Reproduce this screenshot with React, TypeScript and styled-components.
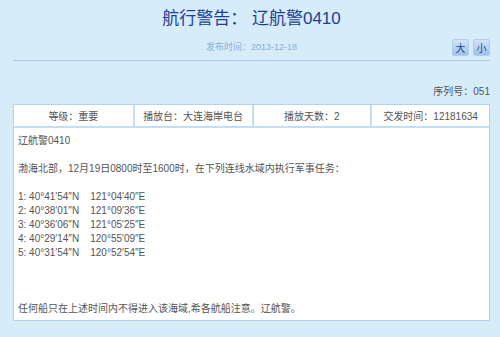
import React from "react";
import styled, { createGlobalStyle } from "styled-components";

const GlobalStyle = createGlobalStyle`
  html, body {
    margin: 0;
    padding: 0;
    background: #d6ecf9;
  }
  body {
    font-family: "Liberation Sans", "Noto Sans CJK SC", sans-serif;
    color: #555;
  }
`;

const Page = styled.div`
  padding: 0 10px 0 13px;
`;

const Title = styled.h1`
  margin: 0;
  padding-top: 9px;
  font-size: 17px;
  line-height: 20px;
  font-weight: normal;
  text-align: center;
  color: #1d3f96;
`;

const InfoRow = styled.div`
  display: grid;
  grid-template-columns: 1fr auto 1fr;
  align-items: center;
  margin-top: 10px;
  padding-bottom: 4px;
  border-bottom: 1px solid #a8caeb;
`;

const PublishDate = styled.div`
  grid-column: 2;
  font-size: 9px;
  line-height: 17px;
  color: #8aaed6;
`;

const SizeButtons = styled.div`
  grid-column: 3;
  justify-self: end;
  display: flex;
  gap: 4px;
  padding-right: 0;
`;

const SizeButton = styled.button`
  width: 17px;
  height: 17px;
  padding: 0;
  border: 1px solid #b3cdeb;
  border-radius: 2px;
  background: linear-gradient(#d2e3f7, #9fc1ea);
  color: #1f4594;
  font-family: "Noto Sans CJK SC", sans-serif;
  font-size: 10px;
  line-height: 15px;
  cursor: pointer;
`;

const Serial = styled.div`
  margin-top: 24px;
  text-align: right;
  font-size: 10px;
  line-height: 14px;
  color: #555;
`;

const Table = styled.div`
  margin-top: 5px;
  background: #fff;
  border: 1px solid #b2d3ef;
`;

const HeaderRow = styled.div`
  display: grid;
  grid-template-columns: repeat(4, 1fr);
  border-bottom: 2px solid #c4def3;
`;

const HeaderCell = styled.div`
  height: 21px;
  display: flex;
  align-items: center;
  justify-content: center;
  font-size: 10px;
  color: #555;
  border-left: 2px solid #c4def3;
  &:first-child {
    border-left: none;
  }
`;

const Body = styled.div`
  padding: 6px 4px 4px;
  font-size: 10px;
  line-height: 14px;
  color: #555;
`;

const Line = styled.div`
  white-space: pre;
  min-height: 14px;
`;

const points = [
  "1: 40°41′54″N    121°04′40″E",
  "2: 40°38′01″N    121°09′36″E",
  "3: 40°36′06″N    121°05′25″E",
  "4: 40°29′14″N    120°55′09″E",
  "5: 40°31′54″N    120°52′54″E",
];

const headers = ["等级：重要", "播放台：大连海岸电台", "播放天数：2", "交发时间：12181634"];

export default function App() {
  return (
    <>
      <GlobalStyle />
      <Page>
        <Title>航行警告： 辽航警0410</Title>
        <InfoRow>
          <PublishDate>发布时间：2013-12-18</PublishDate>
          <SizeButtons>
            <SizeButton>大</SizeButton>
            <SizeButton>小</SizeButton>
          </SizeButtons>
        </InfoRow>
        <Serial>序列号：051</Serial>
        <Table>
          <HeaderRow>
            {headers.map((h) => (
              <HeaderCell key={h}>{h}</HeaderCell>
            ))}
          </HeaderRow>
          <Body>
            <Line>辽航警0410</Line>
            <Line />
            <Line>渤海北部，12月19日0800时至1600时，在下列连线水域内执行军事任务：</Line>
            <Line />
            {points.map((p) => (
              <Line key={p}>{p}</Line>
            ))}
            <Line />
            <Line />
            <Line />
            <Line>任何船只在上述时间内不得进入该海域,希各航船注意。辽航警。</Line>
          </Body>
        </Table>
      </Page>
    </>
  );
}
